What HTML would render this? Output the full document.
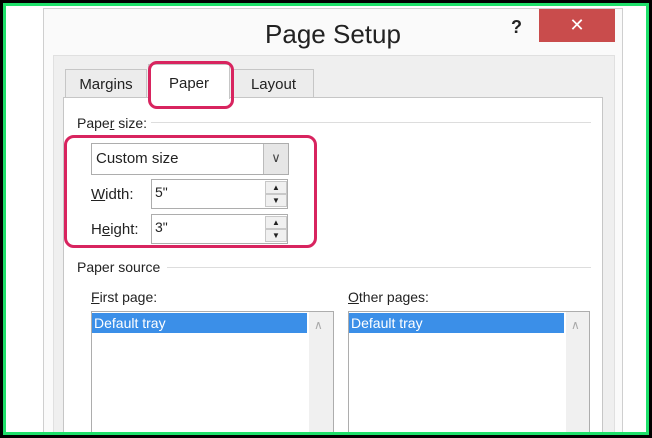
<!DOCTYPE html>
<html><head><style>
*{margin:0;padding:0;box-sizing:border-box}
body{width:652px;height:438px;background:#000;position:relative;overflow:hidden;font-family:"Liberation Sans",sans-serif;color:#222}
.a{position:absolute}
.t{font-size:14px;white-space:nowrap}
.inp{background:#fff;border:1px solid #adadad}
.spin{background:#f0f0f0;border:1px solid #c8c8c8}
u{text-decoration:underline}
</style></head><body>
<div class="a" style="left:3px;top:3px;width:646px;height:432px;border:3px solid #1ee06a;background:#fff"></div>
<!-- dialog -->
<div class="a" style="left:43px;top:8px;width:580px;height:424px;background:#fafafa;border:1px solid #cfcfcf;border-bottom:none"></div>
<div class="a" style="left:0;top:19px;width:666px;text-align:center;font-size:26px;color:#222">Page Setup</div>
<div class="a" style="left:511px;top:17px;font-size:18px;font-weight:bold;color:#222">?</div>
<div class="a" style="left:539px;top:9px;width:76px;height:33px;background:#c94c4c;color:#fff;font-size:18px;text-align:center;line-height:32px">✕</div>
<div class="a" style="left:53px;top:55px;width:562px;height:377px;background:#efefef;border:1px solid #e0e0e0;border-bottom:none"></div>
<!-- tabs -->
<div class="a t" style="left:65px;top:69px;width:82px;height:29px;background:#ececec;border:1px solid #c6c6c6;text-align:center;line-height:29px;font-size:15px">Margins</div>
<div class="a t" style="left:233px;top:69px;width:81px;height:29px;background:#ececec;border:1px solid #c6c6c6;text-align:center;line-height:29px;font-size:15px">Layout</div>
<div class="a" style="left:63px;top:97px;width:540px;height:335px;background:#fff;border:1px solid #c6c6c6;border-bottom:none"></div>
<div class="a t" style="left:148px;top:64px;width:82px;height:35px;background:#fff;border:1px solid #c6c6c6;border-bottom:none;text-align:center;line-height:38px;font-size:15px">Paper</div>
<div class="a" style="left:148px;top:61px;width:86px;height:48px;border:3px solid #d8245f;border-radius:9px"></div>
<!-- paper size -->
<div class="a t" style="left:77px;top:115px">Pape<u>r</u> size:</div>
<div class="a" style="left:151px;top:122px;width:440px;height:1px;background:#ddd"></div>
<div class="a" style="left:91px;top:143px;width:198px;height:32px;background:#fff;border:1px solid #adadad"></div>
<div class="a t" style="left:96px;top:150px;font-size:15px">Custom size</div>
<div class="a" style="left:263px;top:144px;width:25px;height:30px;background:#e6e6e6;border-left:1px solid #bbb;text-align:center;line-height:28px;font-size:13px;color:#444">&#x2228;</div>
<div class="a t" style="left:91px;top:186px;font-size:15px"><u>W</u>idth:</div>
<div class="a inp" style="left:151px;top:179px;width:137px;height:30px"></div>
<div class="a t" style="left:155px;top:184px">5"</div>
<div class="a spin" style="left:265px;top:181px;width:22px;height:13px;font-size:8px;text-align:center;line-height:12px">▲</div>
<div class="a spin" style="left:265px;top:194px;width:22px;height:13px;font-size:8px;text-align:center;line-height:12px">▼</div>
<div class="a t" style="left:91px;top:221px;font-size:15px">H<u>e</u>ight:</div>
<div class="a inp" style="left:151px;top:214px;width:137px;height:30px"></div>
<div class="a t" style="left:155px;top:219px">3"</div>
<div class="a spin" style="left:265px;top:216px;width:22px;height:13px;font-size:8px;text-align:center;line-height:12px">▲</div>
<div class="a spin" style="left:265px;top:229px;width:22px;height:13px;font-size:8px;text-align:center;line-height:12px">▼</div>
<div class="a" style="left:64px;top:135px;width:253px;height:113px;border:3px solid #d8245f;border-radius:10px"></div>
<!-- paper source -->
<div class="a t" style="left:77px;top:259px">Paper source</div>
<div class="a" style="left:167px;top:267px;width:424px;height:1px;background:#ddd"></div>
<div class="a t" style="left:91px;top:289px"><u>F</u>irst page:</div>
<div class="a t" style="left:348px;top:289px"><u>O</u>ther pages:</div>
<div class="a" style="left:91px;top:311px;width:243px;height:121px;background:#fff;border:1px solid #adadad;border-bottom:none"></div>
<div class="a" style="left:309px;top:312px;width:24px;height:120px;background:#f0f0f0"></div>
<div class="a t" style="left:92px;top:313px;width:215px;height:20px;background:#3b8fe8;color:#fff;padding-left:2px;line-height:20px">Default tray</div>
<div class="a" style="left:314px;top:318px;font-size:12px;color:#aaa">&#x2227;</div>
<div class="a" style="left:348px;top:311px;width:242px;height:121px;background:#fff;border:1px solid #adadad;border-bottom:none"></div>
<div class="a" style="left:566px;top:312px;width:23px;height:120px;background:#f0f0f0"></div>
<div class="a t" style="left:349px;top:313px;width:215px;height:20px;background:#3b8fe8;color:#fff;padding-left:2px;line-height:20px">Default tray</div>
<div class="a" style="left:571px;top:318px;font-size:12px;color:#aaa">&#x2227;</div>
<!-- bottom frame -->
<div class="a" style="left:3px;top:432px;width:646px;height:3px;background:#1ee06a"></div>
<div class="a" style="left:0;top:435px;width:652px;height:3px;background:#000"></div>
</body></html>
